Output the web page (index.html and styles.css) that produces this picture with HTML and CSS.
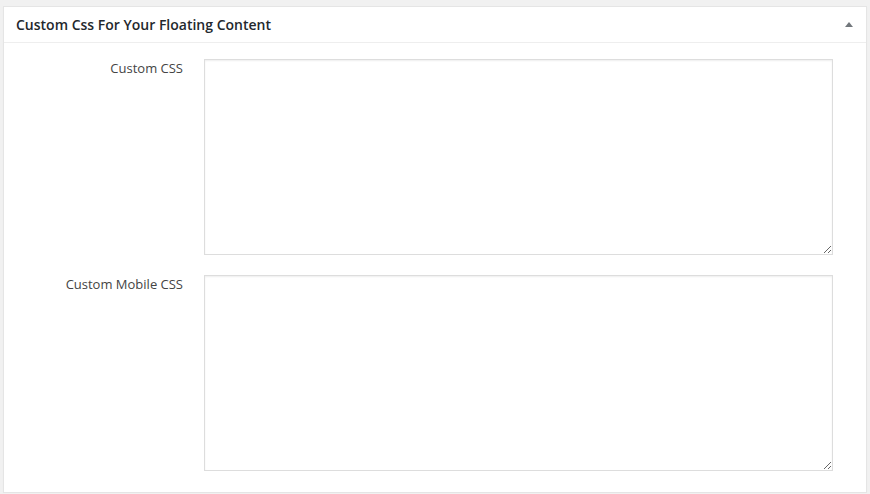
FILE: index.html
```html
<!DOCTYPE html>
<html lang="en">
<head>
  <meta charset="UTF-8">
  <meta name="viewport" content="width=device-width, initial-scale=1.0">
  <link rel="stylesheet" href="styles.css">
  <title>Custom Css For Your Floating Content</title>
</head>
<body>
<div class="postbox">
  <div class="hndle">
    <h2>Custom Css For Your Floating Content</h2>
    <span class="toggleArrow"></span>
  </div>
  <div class="inside">
    <div class="fieldRow">
      <label for="custom_css">Custom CSS</label>
      <textarea id="custom_css"></textarea>
    </div>
    <div class="fieldRow">
      <label for="custom_mobile_css">Custom Mobile CSS</label>
      <textarea id="custom_mobile_css"></textarea>
    </div>
  </div>
</div>
</body>
</html>
```

FILE: styles.css
```css
body {
  margin: 0;
  background: #f1f1f1;
  font-family: "Open Sans", "Liberation Sans", sans-serif;
  color: #23282d;
}

.postbox {
  margin: 6px 0 0 3px;
  width: 862px;
  background: #fff;
  border: 1px solid #e5e5e5;
  box-shadow: 0 1px 1px rgba(0, 0, 0, .04);
}

.hndle {
  display: flex;
  align-items: center;
  justify-content: space-between;
  border-bottom: 1px solid #eee;
  padding: 8px 12px;
  height: 19px;
}

.hndle h2 {
  margin: 0;
  font-size: 14px;
  font-weight: 600;
  line-height: 19px;
}

.toggleArrow {
  width: 0;
  height: 0;
  border-left: 4px solid transparent;
  border-right: 4px solid transparent;
  border-bottom: 5px solid #72777c;
  margin-right: 1px;
}

.inside {
  padding: 16px 0 21px;
  display: flex;
  flex-direction: column;
  gap: 20px;
}

.fieldRow {
  display: grid;
  grid-template-columns: 180px 629px;
  column-gap: 20px;
}

.fieldRow label {
  text-align: right;
  font-size: 13px;
  line-height: 19px;
  color: #444;
  padding-right: 1px;
}

.fieldRow textarea {
  box-sizing: border-box;
  width: 629px;
  height: 196px;
  margin: 0;
  border: 1px solid #ddd;
  box-shadow: inset 0 1px 2px rgba(0, 0, 0, .07);
  background: #fff;
  font-family: "Liberation Mono", monospace;
  font-size: 13px;
}
```
